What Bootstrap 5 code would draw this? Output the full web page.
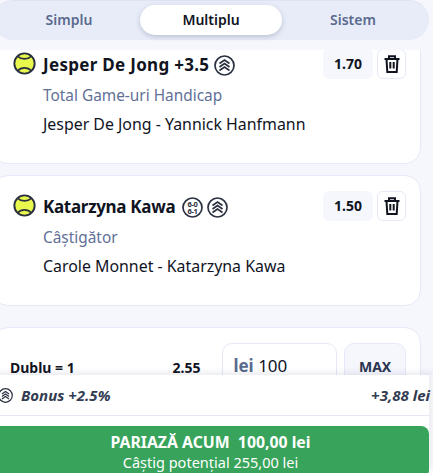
<!DOCTYPE html>
<html lang="ro">
  <head>
    <meta charset="UTF-8" />
    <meta name="viewport" content="width=device-width, initial-scale=1.0" />
    <title>Bilet</title>
    <link href="https://cdn.jsdelivr.net/npm/bootstrap@5.3.2/dist/css/bootstrap.min.css" rel="stylesheet" />
    <style>
      html, body { height: 100%; overflow: hidden; }
      body {
        position: relative;
        background: #f6f7fd;
        font-family: "Noto Sans", "Open Sans", sans-serif;
        color: #10141f;
      }
      .tabs-wrap { position: relative; z-index: 2; height: 50px; background: #f6f7fd; }
      .tabs-bar {
        height: 40px;
        margin: 0 4px 0 -7px;
        padding: 4px 5px 5px;
        background: #e8ecf8;
        border: 1px solid #dfe3f2;
        border-width: 1px 0 0;
        border-radius: 20px;
      }
      .tabs-bar .nav-link {
        height: 30px;
        padding: 0;
        line-height: 30px;
        border-radius: 15px;
        font-size: 14px;
        font-weight: 600;
        color: #5a6a8e;
      }
      .tabs-bar .nav-link.active {
        background: #fff;
        color: #10141f;
        box-shadow: 0 2px 5px rgba(60, 70, 110, .25);
      }
      .slip-list { margin: -17px 12px 0 -8px; }
      .slip-card {
        height: 131px;
        margin-bottom: 11px;
        padding: 15px 14px 0 20px;
        background: #fff;
        border: 1px solid #e6e9f7;
        border-radius: 16px;
      }
      .ball-icon { width: 23px; height: 23px; margin-top: 3px; flex: none; }
      .round-icon { width: 21px; height: 21px; flex: none; }
      .slip-name { margin-left: 7px; padding-top: 1px; font-size: 17px; font-weight: 700; line-height: 30px; white-space: nowrap; }
      .name-wide { letter-spacing: .3px; }
      .name-tight { letter-spacing: -.3px; }
      .name-wide .round-icon { margin-left: 1px; }
      .name-tight .round-icon:first-of-type { margin-left: 3px; }
      .slip-market { margin: 5px 0 0 30px; font-size: 15.4px; line-height: 22px; color: #5f6f96; }
      .slip-teams { margin: 6px 0 0 30px; font-size: 15.9px; line-height: 22px; }
      .odds-box {
        width: 50px;
        height: 30px;
        line-height: 30px;
        background: #f6f7fd;
        border-radius: 6px;
        font-size: 14px;
        font-weight: 700;
        text-align: center;
      }
      .trash-btn {
        width: 29px;
        height: 30px;
        padding: 0;
        display: flex;
        align-items: center;
        justify-content: center;
        background: #fff;
        border: 1px solid #e6e9f7;
        border-radius: 6px;
      }
      .combo-card { height: 140px; margin-top: 21px; padding: 15px 14px 0 17px; }
      .combo-name { width: 163px; padding-top: 14px; font-size: 14px; font-weight: 700; }
      .combo-odds { width: 50px; padding-top: 14px; font-size: 14px; font-weight: 700; }
      .stake-box {
        width: 115px;
        height: 50px;
        padding: 0 10px;
        line-height: 44px;
        border: 1px solid #e6e9f7;
        border-radius: 10px;
        font-size: 17px;
      }
      .stake-box b { color: #5a6a8e; font-weight: 700; }
      .max-btn {
        width: 62px;
        height: 50px;
        margin-left: 7px;
        padding: 0 0 3px;
        background: #f6f7fd;
        border: 1px solid #e6e9f7;
        border-radius: 10px;
        font-size: 14px;
        font-weight: 700;
        color: #2b3550;
      }
      .slip-footer {
        position: absolute;
        left: -8px;
        right: 4px;
        bottom: 0;
        height: 98px;
        background: #fff;
        box-shadow: 4px -3px 6px rgba(60, 70, 110, .1), 12px 0 0 #fff;
      }
      .bonus-row {
        height: 41px;
        padding-left: 6px;
        border-bottom: 1px solid #e4e7f4;
        font-size: 15px;
        font-weight: 700;
        font-style: italic;
        color: #333c52;
      }
      .bonus-total { margin-right: -1px; }
      .bonus-row svg { width: 15px; height: 15px; }
      .bet-btn {
        display: block;
        width: 100%;
        height: 52px;
        margin-top: 10px;
        padding: 0;
        background: #38a35b;
        border: 0;
        border-radius: 8px;
        color: #fff;
        line-height: 20px;
      }
      .bet-btn strong { display: block; font-size: 15.800px; font-weight: 700; }
      .bet-btn span { display: block; font-size: 14.500px; }
    </style>
  </head>
  <body>
    <svg width="0" height="0" class="position-absolute">
      <symbol id="ball" viewBox="0 0 24 24">
        <circle cx="12" cy="12" r="10.600" fill="#e9f84c" stroke="#2b3040" stroke-width="2" />
        <path d="M5 4.500C8.500 8 15.500 8 19 4.500M5 19.500C8.500 15.500 15.500 15.500 19 19.500" fill="none" stroke="#2b3040" stroke-width="1.700" />
      </symbol>
      <symbol id="boost" viewBox="0 0 21 21">
        <circle cx="10.500" cy="10.500" r="9.500" fill="#fff" stroke="#2b3040" stroke-width="1.700" />
        <path d="M5.500 8.500l5-3.500 5 3.500M5.500 12l5-3.500 5 3.500M5.500 15.500l5-3.500 5 3.500" fill="none" stroke="#2b3040" stroke-width="1.700" />
      </symbol>
      <symbol id="trash" viewBox="0 0 16 18">
        <path d="M0.500 4h15M5 4V1.200h6V4" fill="none" stroke="#10141f" stroke-width="2" />
        <path d="M2.500 4l.8 13h9.400l.8-13M6.300 7v6.500M9.700 7v6.500" fill="none" stroke="#10141f" stroke-width="2" />
      </symbol>
    </svg>

    <div class="tabs-wrap">
      <ul class="nav nav-justified tabs-bar">
        <li class="nav-item"><a class="nav-link" href="#">Simplu</a></li>
        <li class="nav-item"><a class="nav-link active" href="#">Multiplu</a></li>
        <li class="nav-item"><a class="nav-link" href="#">Sistem</a></li>
      </ul>
    </div>

    <main class="slip-list">
      <div class="slip-card">
        <div class="d-flex align-items-start">
          <svg class="ball-icon"><use href="#ball" /></svg>
          <div class="slip-name name-wide d-flex align-items-center gap-1 flex-grow-1">
            Jesper De Jong +3.5
            <svg class="round-icon"><use href="#boost" /></svg>
          </div>
          <div class="odds-box">1.70</div>
          <button class="trash-btn ms-1" type="button"><svg width="16" height="18"><use href="#trash" /></svg></button>
        </div>
        <div class="slip-market">Total Game-uri Handicap</div>
        <div class="slip-teams">Jesper De Jong - Yannick Hanfmann</div>
      </div>

      <div class="slip-card">
        <div class="d-flex align-items-start">
          <svg class="ball-icon"><use href="#ball" /></svg>
          <div class="slip-name name-tight d-flex align-items-center gap-1 flex-grow-1">
            Katarzyna Kawa
            <svg class="round-icon" viewBox="0 0 21 21">
              <circle cx="10.500" cy="10.500" r="9.500" fill="#fff" stroke="#2b3040" stroke-width="1.700" />
              <text text-anchor="middle" font-size="7.500" font-weight="700" fill="#2b3040"><tspan x="10.500" y="10">6-0</tspan><tspan x="10.500" y="16.500">6-1</tspan></text>
            </svg>
            <svg class="round-icon"><use href="#boost" /></svg>
          </div>
          <div class="odds-box">1.50</div>
          <button class="trash-btn ms-1" type="button"><svg width="16" height="18"><use href="#trash" /></svg></button>
        </div>
        <div class="slip-market">Câştigător</div>
        <div class="slip-teams">Carole Monnet - Katarzyna Kawa</div>
      </div>

      <div class="slip-card combo-card d-flex align-items-start">
        <div class="combo-name">Dublu = 1</div>
        <div class="combo-odds">2.55</div>
        <div class="stake-box"><b>lei</b> 100</div>
        <button class="max-btn" type="button">MAX</button>
      </div>
    </main>

    <footer class="slip-footer">
      <div class="bonus-row d-flex align-items-center justify-content-between">
        <div class="d-flex align-items-center gap-2"><svg><use href="#boost" /></svg>Bonus +2.5%</div>
        <div class="bonus-total">+3,88 lei</div>
      </div>
      <button class="bet-btn" type="button">
        <strong>PARIAZĂ ACUM&nbsp; 100,00 lei</strong>
        <span>Câștig potențial 255,00 lei</span>
      </button>
    </footer>
    <script src="https://cdn.jsdelivr.net/npm/bootstrap@5.3.2/dist/js/bootstrap.bundle.min.js"></script>
  </body>
</html>
